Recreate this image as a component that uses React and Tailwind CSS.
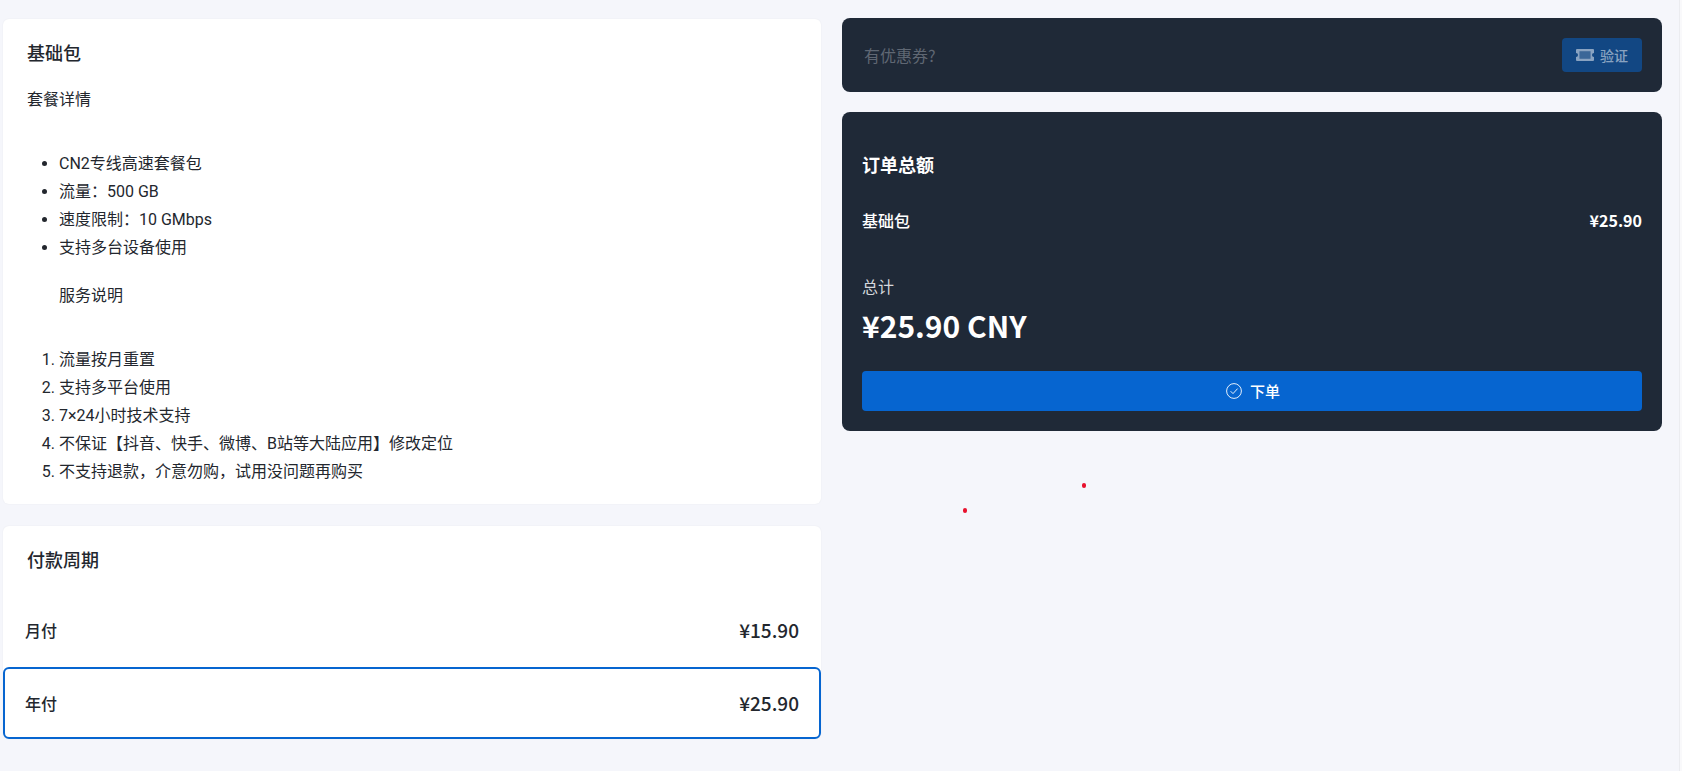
import { useState } from 'react';

const FONT = "font-['Roboto','Noto_Sans_CJK_SC',sans-serif]";
const HEAD_FONT = "font-['Noto_Sans_CJK_SC','Noto_Sans',sans-serif]";

const features = ['CN2专线高速套餐包', '流量：500 GB', '速度限制：10 GMbps', '支持多台设备使用'];
const notes = [
  '流量按月重置',
  '支持多平台使用',
  '7×24小时技术支持',
  '不保证【抖音、快手、微博、B站等大陆应用】修改定位',
  '不支持退款，介意勿购，试用没问题再购买',
];
const periods = [
  { key: 'month', label: '月付', price: '¥15.90' },
  { key: 'year', label: '年付', price: '¥25.90' },
];

function TicketIcon() {
  return (
    <svg viewBox="0 0 18 12" className="w-[18px] h-3">
      <path
        fill="currentColor"
        fillRule="evenodd"
        d="M1 0h16a1 1 0 0 1 1 1v3a2 2 0 0 0 0 4v3a1 1 0 0 1-1 1H1a1 1 0 0 1-1-1V8a2 2 0 0 0 0-4V1a1 1 0 0 1 1-1zm2.5 2.2v7.6h11V2.2h-11z"
      />
      <rect x="3.5" y="2.2" width="11" height="7.6" fill="currentColor" opacity="0.35" />
    </svg>
  );
}

function CheckIcon() {
  return (
    <svg viewBox="0 0 16 16" className="w-4 h-4" fill="none" stroke="currentColor" strokeWidth="0.9">
      <circle cx="8" cy="8" r="7.4" />
      <path d="M4.6 8.2l2.4 2.4 4.6-5" />
    </svg>
  );
}

export default function App() {
  const [period, setPeriod] = useState('year');

  return (
    <div className={`relative min-h-[771px] bg-[#f5f6fb] text-base text-[#23272e] ${HEAD_FONT}`}>
      <div className="flex gap-[21px] pl-[3px] pr-[20px] pt-[18px] pb-[33px]">
        {/* Left column */}
        <div className="w-[818px] flex flex-col gap-[22px] pt-px">
          <div className="bg-white rounded-md shadow-[0_0_2px_rgba(0,0,0,0.06)] px-6 pt-[21px] pb-[18px]">
            <h3 className="text-lg font-medium leading-6">基础包</h3>
            <p className={`leading-7 mt-[22px] ${FONT}`}>套餐详情</p>
            <ul className={`list-disc pl-8 mt-9 leading-7 ${FONT}`}>
              {features.map((f) => (
                <li key={f}>{f}</li>
              ))}
              <p className="mt-5">服务说明</p>
            </ul>
            <ol className={`list-decimal pl-8 mt-9 leading-7 ${FONT}`}>
              {notes.map((n) => (
                <li key={n}>{n}</li>
              ))}
            </ol>
          </div>

          <div className="bg-white rounded-md shadow-[0_0_2px_rgba(0,0,0,0.06)]">
            <h3 className="text-lg font-medium leading-6 px-6 pt-[21px] pb-6">付款周期</h3>
            {periods.map((p) => (
              <div
                key={p.key}
                onClick={() => setPeriod(p.key)}
                className={`h-[72px] flex items-center justify-between px-5 rounded-md cursor-pointer border-2 ${
                  period === p.key ? 'border-[#0665d0]' : 'border-transparent pb-0.5'
                }`}
              >
                <span className="font-medium">{p.label}</span>
                <span className="text-[19px] font-medium">{p.price}</span>
              </div>
            ))}
          </div>
        </div>

        {/* Right column */}
        <div className="w-[820px] flex flex-col gap-5">
          <div className="h-[74px] bg-[#1f2937] rounded-lg flex items-center justify-between pl-[22px] pr-5">
            <input
              placeholder="有优惠券?"
              className="bg-transparent outline-none placeholder:text-[#5f6773] text-base flex-1"
            />
            <button className="w-20 h-[34px] rounded-sm bg-[#0665d0]/50 text-white/50 text-sm font-medium flex items-center justify-center gap-1.5">
              <TicketIcon />
              验证
            </button>
          </div>

          <div className="bg-[#1f2937] rounded-lg text-white px-5 pt-[40px] pb-5">
            <h3 className="text-lg font-bold leading-6">订单总额</h3>
            <div className="flex items-center justify-between mt-8 font-medium leading-6">
              <span>基础包</span>
              <span className="font-bold">¥25.90</span>
            </div>
            <div className="mt-[42px] text-[#d4d7dc] leading-6">总计</div>
            <div className="text-[30px] font-bold leading-10 mt-[7px]">¥25.90 CNY</div>
            <button className="w-full h-10 mt-[26px] pl-0.5 rounded-sm bg-[#0665d0] flex items-center justify-center gap-2 text-[15px] font-medium">
              <CheckIcon />
              下单
            </button>
          </div>
        </div>
      </div>

      {/* stray red dots on the page */}
      <span className="absolute left-[1082px] top-[483px] w-1 h-[5px] rounded-full bg-[#e8112d]" />
      <span className="absolute left-[963px] top-[508px] w-1 h-[5px] rounded-full bg-[#e8112d]" />

      {/* thin page scrollbar track */}
      <div className="absolute right-0 top-0 bottom-0 w-[3px] bg-[#f9f9fb] border-l border-[#ebecf0]" />
    </div>
  );
}
